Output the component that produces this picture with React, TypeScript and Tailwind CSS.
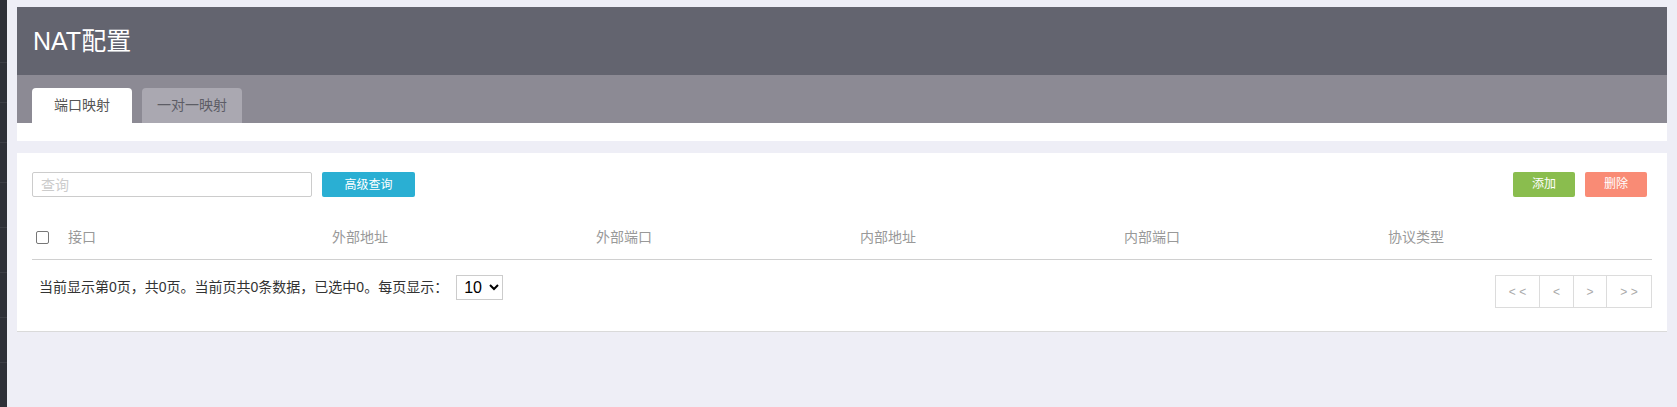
import { useState } from "react";

const font = { fontFamily: '"Liberation Sans", Arial, "Noto Sans CJK SC", sans-serif' };

const columns = ["接口", "外部地址", "外部端口", "内部地址", "内部端口", "协议类型"];

// section heights of the dark side strip, each ends with a faint divider
const sideRows = ["h-[63px]", "h-[40px]", "h-[40px]", "h-[40px]", "h-[45px]", "h-[45px]", "h-[45px]", "h-[45px]"];

function SideStrip() {
  return (
    <div className="w-[7px] shrink-0 bg-[#2e3038] flex flex-col">
      {sideRows.map((h, i) => (
        <div key={i} className={`${h} shrink-0 border-b border-[#3c3e46]`} />
      ))}
    </div>
  );
}

function Tabs() {
  const [active, setActive] = useState(0);
  const tabs = ["端口映射", "一对一映射"];
  return (
    <div className="h-[48px] bg-[#8c8a94] pl-[15px] flex items-end gap-[10px]">
      {tabs.map((t, i) => (
        <button
          key={t}
          onClick={() => setActive(i)}
          className={`w-[100px] h-[35px] rounded-t-[4px] text-[14px] leading-[35px] text-center ${
            active === i ? "bg-white text-[#555]" : "bg-[#aaa8b1] text-[#5d5d66]"
          }`}
        >
          {t}
        </button>
      ))}
    </div>
  );
}

function Pager() {
  const items = [
    { label: "< <", w: "w-[43px]" },
    { label: "<", w: "w-[34px]" },
    { label: ">", w: "w-[33px]" },
    { label: "> >", w: "w-[45px]" },
  ];
  return (
    <div className="flex h-[33px] border border-[#dcdcdc]">
      {items.map((it, i) => (
        <div
          key={i}
          className={`${it.w} flex items-center justify-center text-[12px] text-[#aaa] ${
            i > 0 ? "border-l border-[#dcdcdc]" : ""
          }`}
        >
          {it.label}
        </div>
      ))}
    </div>
  );
}

export default function App() {
  return (
    <div className="w-full h-[407px] bg-[#eeeef6] flex overflow-hidden" style={font}>
      <SideStrip />

      <div className="flex-1 pl-[10px] pr-[10px] pt-[7px] flex flex-col">
        {/* title card */}
        <div className="bg-white">
          <div className="h-[68px] bg-[#63646f] px-[16px] flex items-center">
            <h1 className="text-[25px] leading-none text-white">NAT配置</h1>
          </div>
          <Tabs />
          <div className="h-[18px]" />
        </div>

        {/* list card */}
        <div className="mt-[12px] bg-white border-b border-[#dadada] px-[15px] pt-[19px] pb-[23px]">
          <div className="flex items-center h-[25px] pr-[5px]">
            <input
              placeholder="查询"
              className="w-[280px] h-[25px] border border-[#cccccc] rounded-[2px] pl-[8px] text-[14px] placeholder:text-[#cccccc] outline-none"
            />
            <button className="ml-[10px] w-[93px] h-[25px] bg-[#2aafd3] rounded-[2px] text-white text-[12px]">
              高级查询
            </button>
            <div className="flex-1" />
            <button className="w-[62px] h-[25px] bg-[#8abd4e] rounded-[2px] text-white text-[12px] -mt-[1px]">
              添加
            </button>
            <button className="ml-[10px] w-[62px] h-[25px] bg-[#f98b75] rounded-[2px] text-white text-[12px] -mt-[1px]">
              删除
            </button>
          </div>

          <div className="mt-[22px] h-[41px] pb-[4px] border-b border-[#d0d0d0] grid grid-cols-[36px_repeat(6,1fr)] items-center">
            <div className="pl-[4px] flex items-center">
              <span className="w-[13px] h-[13px] border border-[#777] rounded-[2px] block" />
            </div>
            {columns.map((c) => (
              <div key={c} className="text-[14px] text-[#999]">
                {c}
              </div>
            ))}
          </div>

          <div className="mt-[15px] flex items-start">
            <div className="pl-[7px] h-[25px] flex items-center text-[14px] text-[#333]">
              当前显示第0页，共0页。当前页共0条数据，已选中0。每页显示：
            </div>
            <select className="ml-[8px] w-[47px] h-[25px] border border-[#cccccc] text-[16px] text-black pl-[3px]" defaultValue="10">
              <option value="10">10</option>
              <option value="20">20</option>
              <option value="50">50</option>
            </select>
            <div className="flex-1" />
            <Pager />
          </div>
        </div>
      </div>
    </div>
  );
}
